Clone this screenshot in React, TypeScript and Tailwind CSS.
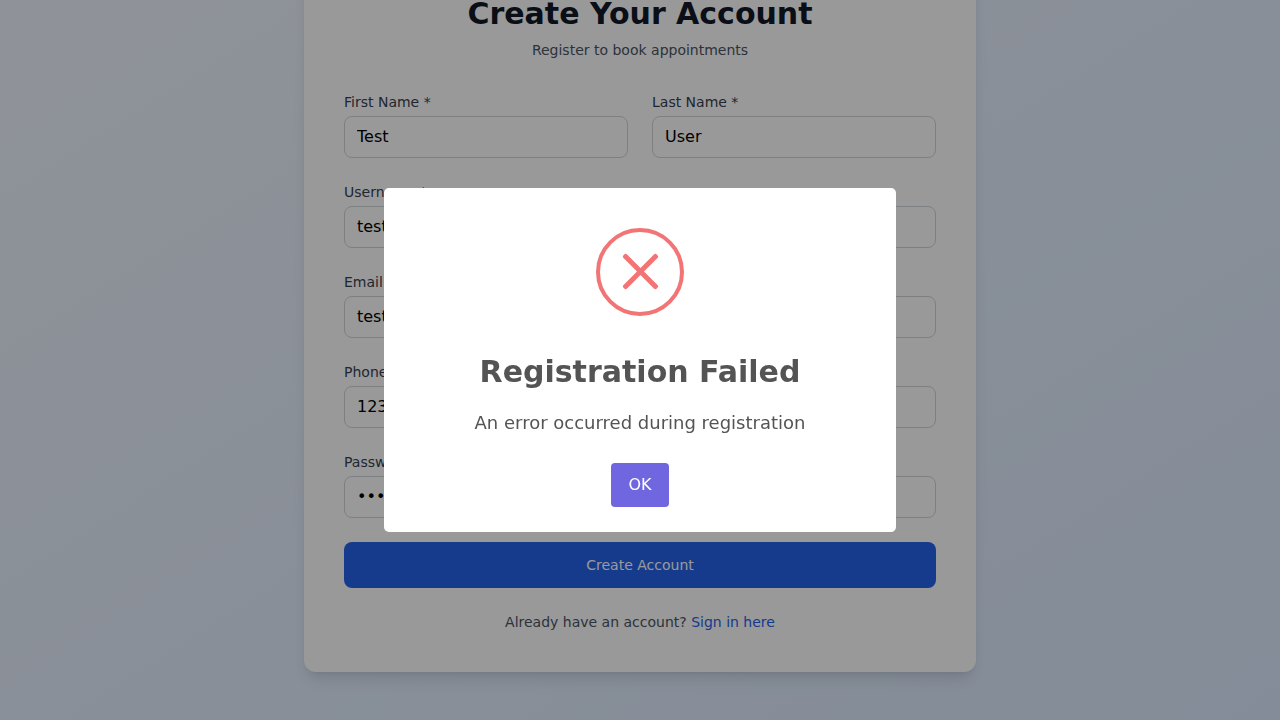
type FieldProps = {
  id: string;
  label: string;
  value: string;
  type?: string;
};

function Field({ id, label, value, type = "text" }: FieldProps) {
  return (
    <div>
      <label htmlFor={id} className="mb-1 block text-sm font-medium text-[#374151]">
        {label}
      </label>
      <input
        id={id}
        type={type}
        defaultValue={value}
        className="block w-full rounded-lg border border-[#d1d5db] bg-white px-3 py-2 text-base text-black outline-none"
      />
    </div>
  );
}

function RegisterCard() {
  return (
    <div className="w-full max-w-2xl rounded-xl bg-white p-10 shadow-lg">
      <div className="mb-8 text-center">
        <h1 className="text-3xl font-bold text-[#111827]">Create Your Account</h1>
        <p className="mt-2 text-sm text-[#4b5563]">Register to book appointments</p>
      </div>
      <form className="flex flex-col gap-6">
        <div className="grid grid-cols-2 gap-6">
          <Field id="firstName" label="First Name *" value="Test" />
          <Field id="lastName" label="Last Name *" value="User" />
        </div>
        <Field id="username" label="Username *" value="testuser" />
        <Field id="email" label="Email *" value="test@example.com" type="email" />
        <Field id="phone" label="Phone" value="1234567890" type="tel" />
        <Field id="password" label="Password *" value="password" type="password" />
        <button
          type="button"
          className="w-full rounded-lg border border-transparent bg-[#2563eb] px-4 py-3 text-sm font-medium text-white"
        >
          Create Account
        </button>
        <p className="text-center text-sm text-[#4b5563]">
          Already have an account?{" "}
          <a href="#" className="font-medium text-[#2563eb]">
            Sign in here
          </a>
        </p>
      </form>
    </div>
  );
}

function ErrorDialog() {
  return (
    <div className="fixed inset-0 flex items-center justify-center bg-black/40">
      <div
        role="dialog"
        className="flex w-[512px] flex-col items-center rounded-[5px] bg-white pb-5 text-[#545454] will-change-transform"
      >
        <svg
          className="mt-10 mb-[8.6px] block h-[88px] w-[88px]"
          viewBox="0 0 88 88"
          fill="none"
        >
          <circle cx="44" cy="44" r="42" stroke="#f27474" strokeWidth="4" />
          <g fill="#f27474">
            <rect x="21" y="41" width="47" height="5" rx="2" transform="rotate(45 44.5 43.5)" />
            <rect x="21" y="41" width="47" height="5" rx="2" transform="rotate(-45 44.5 43.5)" />
          </g>
        </svg>
        <h2 className="px-[30px] pt-6 text-center text-[30px] leading-[45px] font-semibold">
          Registration Failed
        </h2>
        <div className="mx-[28.8px] mt-[18px] mb-[5.4px] text-center text-[18px] leading-[normal]">
          An error occurred during registration
        </div>
        <div className="mt-5 flex justify-center">
          <button
            type="button"
            className="m-[5px] rounded-[4px] bg-[#7066e0] px-[17.6px] py-[10px] text-base font-medium text-white"
          >
            OK
          </button>
        </div>
      </div>
    </div>
  );
}

export default function App() {
  return (
    <div className="flex h-screen flex-col justify-end overflow-hidden font-['DejaVu_Sans',sans-serif]">
      <div className="flex shrink-0 items-center justify-center bg-[linear-gradient(to_bottom_right,#f0f5ff,#dbeafe)] px-4 py-12">
        <RegisterCard />
      </div>
      <ErrorDialog />
    </div>
  );
}
